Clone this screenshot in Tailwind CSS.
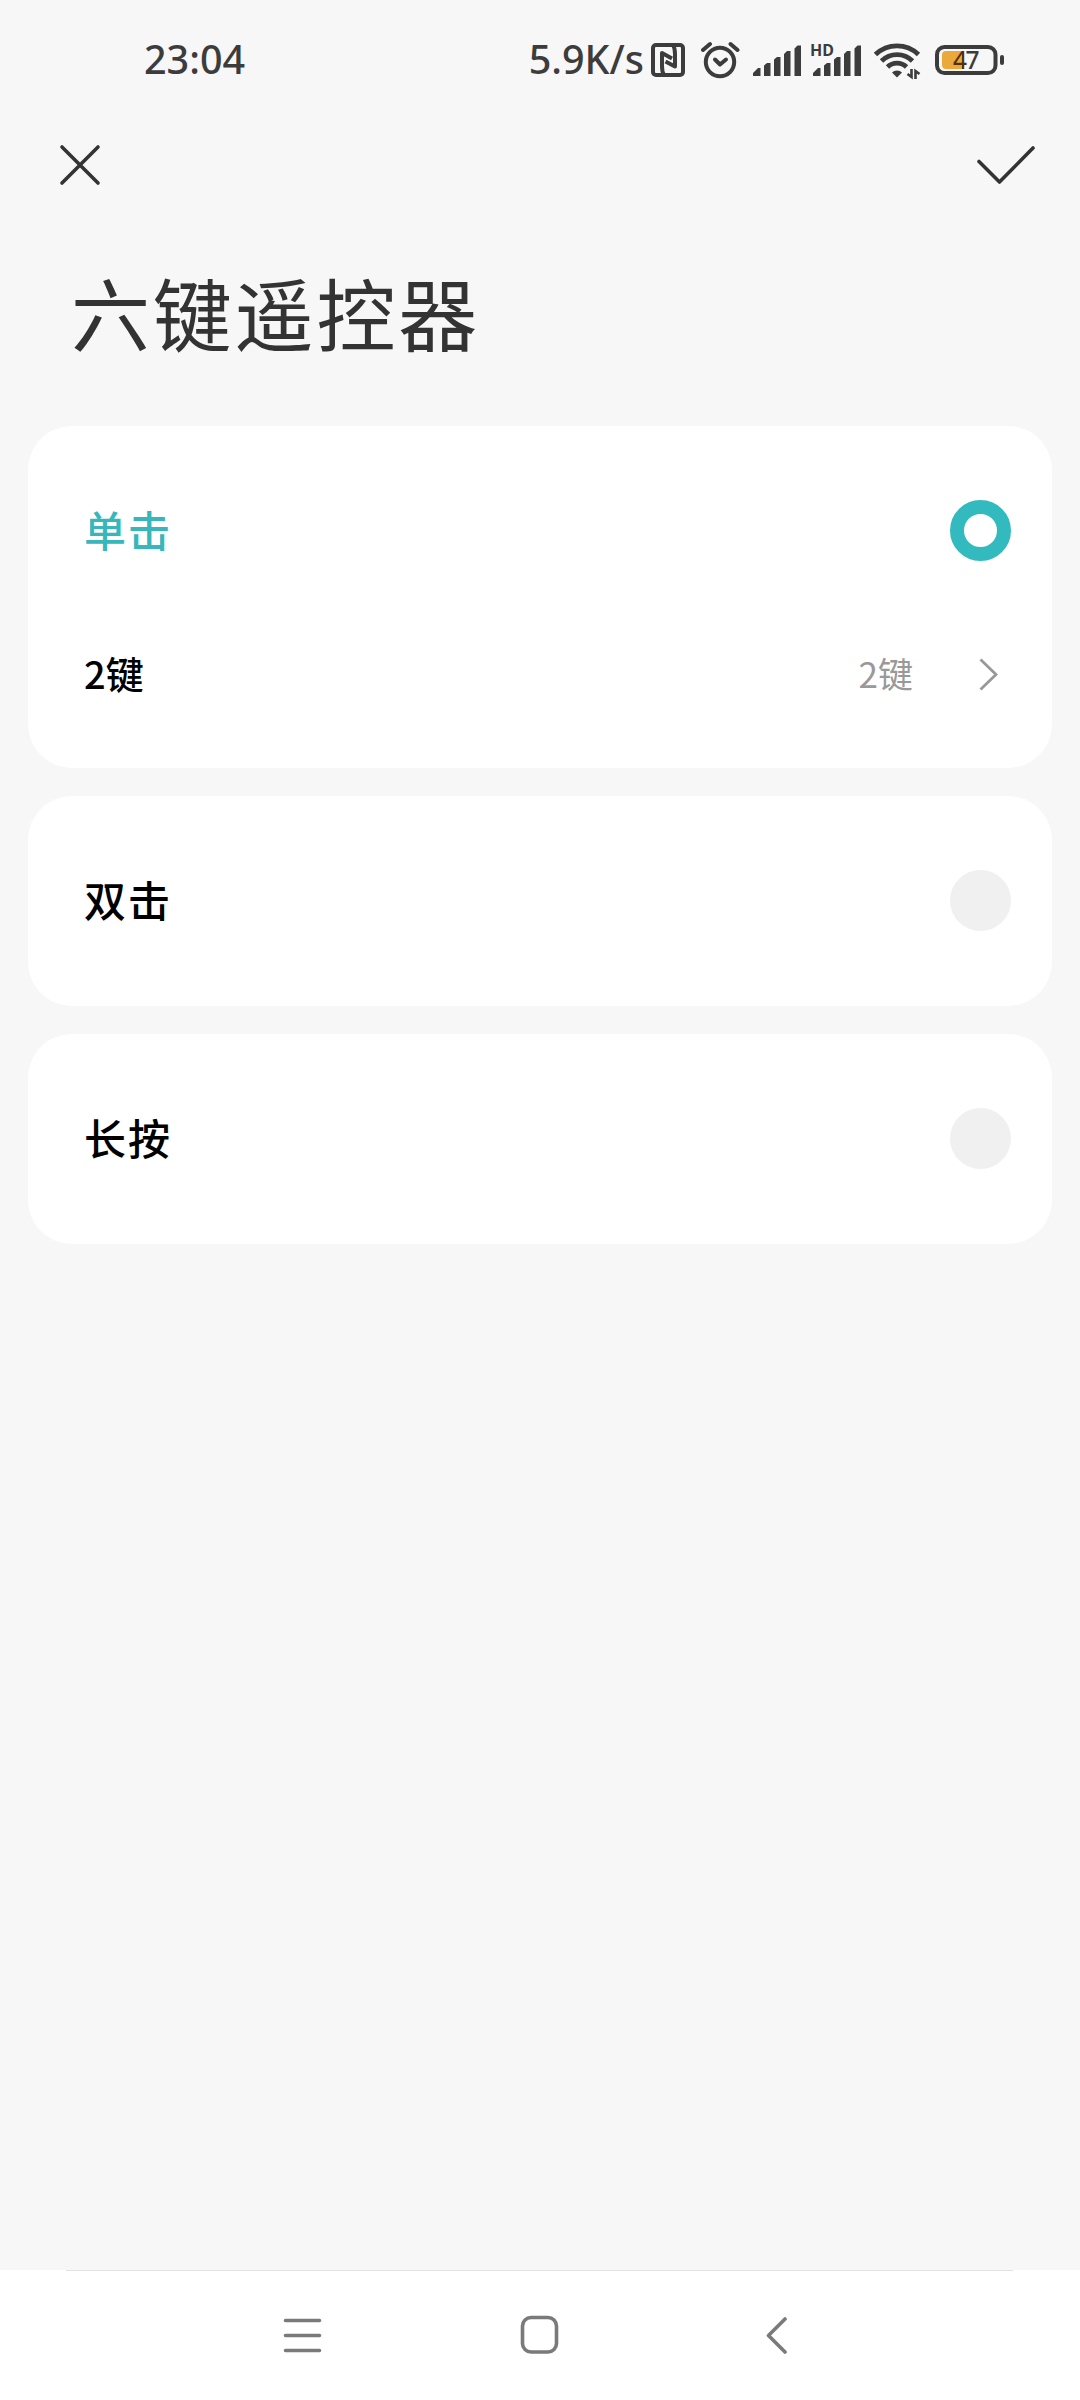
<!DOCTYPE html>
<html lang="zh-CN">
<head>
  <meta charset="UTF-8">
  <meta name="viewport" content="width=device-width, initial-scale=1.0">
  <title>六键遥控器</title>
  <script src="https://cdn.jsdelivr.net/npm/@tailwindcss/browser@4"></script>
</head>
<body class="bg-[#f7f7f7] font-['Noto_Sans_CJK_SC',sans-serif]">
<div class="w-[1080px] h-[2400px] flex flex-col overflow-hidden">

  <!-- status bar -->
  <div class="h-[120px] pl-[144px] pr-[75px] flex items-center justify-between text-[#3c3c3c] font-['Noto_Sans',sans-serif] font-medium">
    <span class="text-[39.500px] leading-none">23:04</span>
    <div class="flex items-center">
      <span class="mr-[7px] text-[39.500px] leading-none">5.9K/s</span>
      <!-- nfc -->
      <svg class="w-[34px] h-[40px]" viewBox="0 0 34 40" fill="none" stroke="currentColor" stroke-width="4" stroke-linejoin="round">
        <rect x="2" y="5" width="30" height="30" rx="3"/>
        <path d="M13 35c-2-3-2-6-2-9V13l10 5.500M22 5c2 3 2 6 2 9v12.500L14.500 21.500"/>
      </svg>
      <!-- alarm -->
      <svg class="w-[40px] h-[40px] ml-4" viewBox="0 0 40 40" fill="none" stroke="currentColor" stroke-width="4" stroke-linecap="round">
        <circle cx="19" cy="22" r="14.200"/>
        <path d="M2 10l7-6M36.500 10l-7-6"/>
        <path d="M14 19.500l5 5 6-5" stroke-linejoin="round"/>
      </svg>
      <!-- sim 1 -->
      <svg class="w-[48px] h-[40px] ml-3" viewBox="0 0 48 40" fill="currentColor">
        <path d="M0 36v-3l5-5h2.500v8zM11 36V25.500l3-2.500h3.500v13zM21 36V19.500l3-2.500h3.500v19zM31 36V14l3-3h3.500v25zM41.500 36V8.500l3-3H48V36z"/>
      </svg>
      <!-- sim 2 -->
      <div class="relative ml-3 w-[48px] h-[40px]">
        <svg class="w-[48px] h-[40px]" viewBox="0 0 48 40" fill="currentColor">
          <path d="M0 36v-3l5-5h2.500v8zM11 36V25.500l3-2.500h3.500v13zM21 36V19.500l3-2.500h3.500v19zM31 36V14l3-3h3.500v25zM41.500 36V8.500l3-3H48V36z"/>
        </svg>
        <span class="absolute -left-[3px] top-[2px] text-[16px] leading-none font-bold">HD</span>
      </div>
      <!-- wifi -->
      <svg class="w-[47px] h-[40px] ml-[13px]" viewBox="0 0 47 40" fill="none" stroke="currentColor" stroke-width="4.800">
        <path d="M1.500 14.500a31 31 0 0 1 43 0"/>
        <path d="M7.500 21a22 22 0 0 1 31 0"/>
        <path d="M13.500 27a13.500 13.500 0 0 1 19 0"/>
        <path d="M18 32.500a7 7 0 0 1 10 0l-5 5z" fill="currentColor" stroke="none"/>
        <path d="M37.500 29v8l-4-3M41.500 39v-8l4 3" stroke-width="2.600"/>
      </svg>
      <!-- battery -->
      <div class="relative ml-[14px] w-[70px] h-[40px]">
        <svg class="w-[70px] h-[40px]" viewBox="0 0 70 40" fill="none">
          <rect x="2" y="7" width="58.500" height="26" rx="7.500" stroke="currentColor" stroke-width="4"/>
          <path d="M11 11h15v18H11a4 4 0 0 1-4-4V15a4 4 0 0 1 4-4z" fill="#eba93c"/>
          <rect x="65" y="15" width="4" height="10" rx="2" fill="currentColor"/>
        </svg>
        <span class="absolute left-[18px] top-[8px] text-[24.500px] leading-none tracking-[-1.500px]"><span class="text-[#54300a]">4</span>7</span>
      </div>
    </div>
  </div>

  <!-- close / confirm -->
  <div class="h-[90px] pl-[58px] pr-[43px] flex items-center justify-between text-[#333]">
    <svg class="w-[44px] h-[44px]" viewBox="0 0 44 44" fill="none" stroke="currentColor" stroke-width="3.600" stroke-linecap="round">
      <path d="M4 4l36 36M40 4L4 40"/>
    </svg>
    <svg class="w-[60px] h-[44px]" viewBox="0 0 60 44" fill="none" stroke="currentColor" stroke-width="3.600" stroke-linecap="round" stroke-linejoin="round">
      <path d="M2 18.500L22.500 39 56 5"/>
    </svg>
  </div>

  <h1 class="h-[216px] pl-[71px] pt-[61px] text-[79px] leading-[82px] tracking-[2.800px] text-[#333]">六键遥控器</h1>

  <div class="px-7 flex flex-col gap-7">
    <div class="h-[342px] rounded-[44px] bg-white pl-14 pr-[41px]">
      <div class="h-[209px] flex items-center justify-between">
        <span class="pb-[4px] text-[42px] leading-none tracking-[2px] font-medium text-[#37b7bc]">单击</span>
        <span class="size-[61px] rounded-full border-[14px] border-[#33babe]"></span>
      </div>
      <div class="h-[78px] flex items-center">
        <span class="pb-[2px] text-[38px] leading-none font-medium text-black">2键</span>
        <span class="ml-auto pb-[4px] text-[35px] leading-none text-[#999]">2键</span>
        <svg class="w-[20px] h-[34px] ml-[66px] mr-[12px]" viewBox="0 0 20 34" fill="none" stroke="#999" stroke-width="2.800">
          <path d="M1.500 2.500l15.500 15L1.500 32.500"/>
        </svg>
      </div>
    </div>

    <div class="h-[210px] pb-[2px] rounded-[44px] bg-white pl-14 pr-[41px] flex items-center justify-between">
      <span class="pb-[3px] text-[42px] leading-none tracking-[2px] font-medium text-black">双击</span>
      <span class="size-[61px] rounded-full bg-[#f0f0f0]"></span>
    </div>

    <div class="h-[210px] pb-[2px] rounded-[44px] bg-white pl-14 pr-[41px] flex items-center justify-between">
      <span class="pb-[3px] text-[42px] leading-none tracking-[2px] font-medium text-black">长按</span>
      <span class="size-[61px] rounded-full bg-[#f0f0f0]"></span>
    </div>
  </div>

  <!-- system navigation -->
  <div class="mt-auto h-[130px] bg-white flex flex-col">
    <div class="h-px ml-[66px] mr-[67px] bg-[#e2e2e2]"></div>
    <div class="h-[129px] pb-[2px] pl-[283px] flex items-center text-[#7a7a7a]">
      <svg class="w-[39px] h-[40px]" viewBox="0 0 39 40" fill="none" stroke="currentColor" stroke-width="3.600" stroke-linecap="round">
        <path d="M2.500 5.500h34M2.500 20.500h34M2.500 35.500h34"/>
      </svg>
      <svg class="w-[39px] h-[40px] ml-[198px]" viewBox="0 0 39 40" fill="none" stroke="currentColor" stroke-width="3.600">
        <rect x="2.500" y="2.500" width="34" height="34.500" rx="8.500"/>
      </svg>
      <svg class="w-[22px] h-[40px] ml-[207px]" viewBox="0 0 22 40" fill="none" stroke="currentColor" stroke-width="3.600" stroke-linecap="round" stroke-linejoin="round">
        <path d="M19 4L2.500 20.500 19 37"/>
      </svg>
    </div>
  </div>
</div>
</body>
</html>
